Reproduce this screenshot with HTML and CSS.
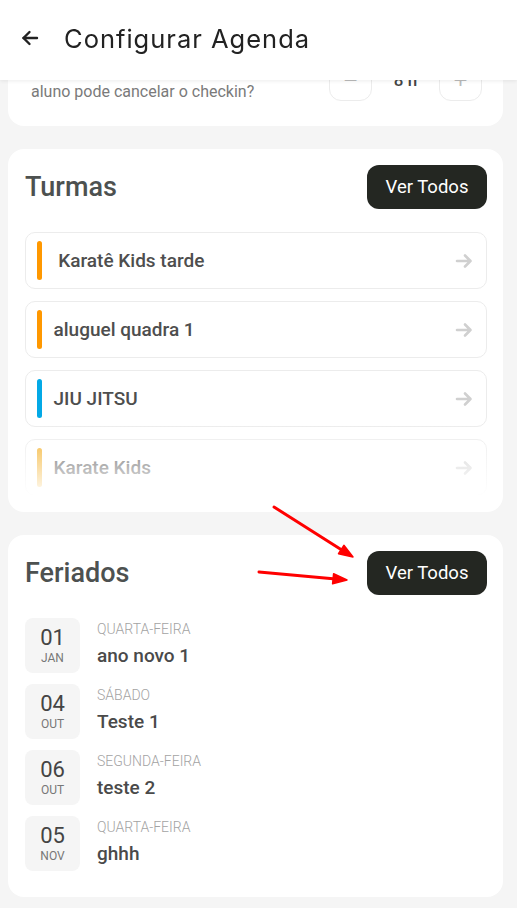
FILE: index.html
```
<!DOCTYPE html>
<html lang="pt-BR">
<head>
    <meta charset="UTF-8">
    <meta name="viewport" content="width=device-width, initial-scale=1.0">
    <title>Configurar Agenda</title>
    <link rel="stylesheet" href="styles.css">
</head>
<body>

<header class="topbar">
    <button class="back-btn" type="button" aria-label="Voltar">
        <svg width="18" height="18" viewBox="0 0 18 18" fill="none" stroke="#222" stroke-width="2.4" stroke-linecap="round" stroke-linejoin="round">
            <path d="M16 9H2.5"/>
            <path d="M8.5 3L2.5 9l6 6"/>
        </svg>
    </button>
    <h1>Configurar Agenda</h1>
</header>

<main class="content">

    <section class="card card-setting">
        <p class="setting-text">aluno pode cancelar o checkin?</p>
        <div class="stepper">
            <button type="button" class="step-btn">&minus;</button>
            <span class="step-value">8 h</span>
            <button type="button" class="step-btn">+</button>
        </div>
    </section>

    <section class="card">
        <div class="card-head">
            <h2>Turmas</h2>
            <button type="button" class="btn-dark">Ver Todos</button>
        </div>
        <div class="class-list">
            <a class="class-item" href="#">
                <span class="bar" style="background:#ff9800"></span>
                <span class="class-name">&nbsp;Karatê Kids tarde</span>
                <svg class="go" width="18" height="18" viewBox="0 0 18 18" fill="none" stroke="#d0d0d0" stroke-width="2.6" stroke-linecap="round" stroke-linejoin="round"><path d="M2 9h13.5M10 3.5L15.5 9 10 14.5"/></svg>
            </a>
            <a class="class-item" href="#">
                <span class="bar" style="background:#ff9800"></span>
                <span class="class-name">aluguel quadra 1</span>
                <svg class="go" width="18" height="18" viewBox="0 0 18 18" fill="none" stroke="#d0d0d0" stroke-width="2.6" stroke-linecap="round" stroke-linejoin="round"><path d="M2 9h13.5M10 3.5L15.5 9 10 14.5"/></svg>
            </a>
            <a class="class-item" href="#">
                <span class="bar" style="background:#03a9e6"></span>
                <span class="class-name">JIU JITSU</span>
                <svg class="go" width="18" height="18" viewBox="0 0 18 18" fill="none" stroke="#d0d0d0" stroke-width="2.6" stroke-linecap="round" stroke-linejoin="round"><path d="M2 9h13.5M10 3.5L15.5 9 10 14.5"/></svg>
            </a>
            <a class="class-item" href="#">
                <span class="bar" style="background:#f4b028"></span>
                <span class="class-name">Karate Kids</span>
                <svg class="go" width="18" height="18" viewBox="0 0 18 18" fill="none" stroke="#d0d0d0" stroke-width="2.6" stroke-linecap="round" stroke-linejoin="round"><path d="M2 9h13.5M10 3.5L15.5 9 10 14.5"/></svg>
            </a>
        </div>
    </section>

    <section class="card card-holidays">
        <div class="card-head">
            <h2>Feriados</h2>
            <button type="button" class="btn-dark">Ver Todos</button>
        </div>
        <ul class="holiday-list">
            <li class="holiday">
                <div class="date-box"><span class="day">01</span><span class="month">JAN</span></div>
                <div class="holiday-info"><span class="weekday">Quarta-feira</span><span class="holiday-name">ano novo 1</span></div>
            </li>
            <li class="holiday">
                <div class="date-box"><span class="day">04</span><span class="month">OUT</span></div>
                <div class="holiday-info"><span class="weekday">Sábado</span><span class="holiday-name">Teste 1</span></div>
            </li>
            <li class="holiday">
                <div class="date-box"><span class="day">06</span><span class="month">OUT</span></div>
                <div class="holiday-info"><span class="weekday">Segunda-feira</span><span class="holiday-name">teste 2</span></div>
            </li>
            <li class="holiday">
                <div class="date-box"><span class="day">05</span><span class="month">NOV</span></div>
                <div class="holiday-info"><span class="weekday">Quarta-feira</span><span class="holiday-name">ghhh</span></div>
            </li>
        </ul>
    </section>

</main>

<!-- red annotation arrows drawn over the screenshot -->
<svg class="annotations" width="517" height="908" viewBox="0 0 517 908">
    <g stroke="#ff0000" stroke-width="3" stroke-linecap="round" fill="#ff0000">
        <line x1="274" y1="507" x2="341" y2="549.5"/>
        <polygon points="353,557 338.5,553.7 343.9,545.3" stroke-width="1.5" stroke-linejoin="round"/>
        <line x1="259" y1="572" x2="333" y2="578.7"/>
        <polygon points="347,580 332.6,583.7 333.6,573.7" stroke-width="1.5" stroke-linejoin="round"/>
    </g>
</svg>

</body>
</html>
```

FILE: styles.css
```
body {
    margin: 0;
    padding: 0;
    background-color: #f5f5f5;
    font-family: Roboto, "Liberation Sans", Arial, sans-serif;
    color: #4a4a4a;
}

/* fixed top bar */
.topbar {
    position: fixed;
    top: 0;
    left: 0;
    right: 0;
    height: 80px;
    background-color: #ffffff;
    display: flex;
    align-items: center;
    padding: 0 20px 4px 20px;
    box-shadow: 0px 1px 4px rgba(0, 0, 0, 0.08);
    z-index: 10;
    box-sizing: border-box;
}

.back-btn {
    background: none;
    border: none;
    padding: 0;
    margin: 0 24px 0 0;
    width: 20px;
    height: 20px;
    display: flex;
    align-items: center;
    justify-content: center;
}

.topbar h1 {
    margin: 0;
    font-family: Inter, Lato, sans-serif;
    font-weight: 400;
    font-size: 25.5px;
    letter-spacing: 1px;
    color: #222;
}

.content {
    display: flex;
    flex-direction: column;
    gap: 23px;
    padding: 38px 14px 12px 8px;
}

.card {
    background-color: #ffffff;
    border-radius: 16px;
    padding: 16px 16px 17px 17px;
}

/* first card, mostly under the top bar */
.card-setting {
    display: flex;
    justify-content: space-between;
    align-items: flex-end;
    padding: 20px 21px 21px 23px;
}

.setting-text {
    margin: 0;
    font-size: 16px;
    line-height: 26px;
    color: #7a7a7a;
}

.stepper {
    display: flex;
    align-items: center;
    margin-bottom: 4px;
}

.step-btn {
    width: 43px;
    height: 43px;
    border: 1px solid #ececec;
    border-radius: 12px;
    background: #fff;
    font-size: 24px;
    color: #bbb;
    padding: 0;
}

.step-value {
    width: 67px;
    text-align: center;
    font-size: 17px;
    font-weight: 500;
    color: #444;
}

.card-head {
    display: flex;
    justify-content: space-between;
    align-items: center;
}

.card-head h2 {
    margin: 0;
    font-size: 27px;
    font-weight: 500;
    color: #4d5150;
}

.btn-dark {
    width: 120px;
    height: 44px;
    border: none;
    border-radius: 12px;
    background-color: #242722;
    color: #ffffff;
    font-family: Roboto, sans-serif;
    font-size: 18.5px;
    cursor: pointer;
}

/* class list with faded bottom */
.class-list {
    position: relative;
    margin-top: 23px;
    height: 263px;
    overflow: hidden;
    display: flex;
    flex-direction: column;
    gap: 12px;
}

.class-list::after {
    content: "";
    position: absolute;
    left: 0;
    right: 0;
    bottom: 0;
    height: 72px;
    background: linear-gradient(to bottom, rgba(255, 255, 255, 0), rgba(255, 255, 255, 0.95));
}

.class-item {
    flex-shrink: 0;
    display: flex;
    align-items: center;
    height: 57px;
    box-sizing: border-box;
    border: 1.5px solid #ececec;
    border-radius: 10px;
    padding: 0 13px 0 10.5px;
    text-decoration: none;
}

.bar {
    width: 5px;
    height: 39px;
    border-radius: 3px;
    margin-right: 12px;
}

.class-name {
    flex: 1;
    font-size: 19px;
    font-weight: 500;
    color: #4e4e4e;
}

.card-holidays {
    padding-bottom: 26px;
}

.holiday-list {
    list-style-type: none;
    margin: 23px 0 0 0;
    padding: 0;
    display: flex;
    flex-direction: column;
    gap: 11px;
}

.holiday {
    display: flex;
    align-items: flex-start;
    gap: 17px;
}

.date-box {
    width: 55px;
    height: 55px;
    border-radius: 8px;
    background-color: #f5f5f5;
    display: flex;
    flex-direction: column;
    align-items: center;
    justify-content: center;
}

.day {
    font-size: 22px;
    line-height: 24px;
    color: #444;
}

.month {
    font-size: 12px;
    line-height: 16px;
    color: #777;
}

.holiday-info {
    display: flex;
    flex-direction: column;
    padding-top: 1px;
}

.weekday {
    font-size: 14px;
    font-weight: 300;
    line-height: 20px;
    text-transform: uppercase;
    color: #a3a3a3;
}

.holiday-name {
    margin-top: 5px;
    font-size: 19px;
    font-weight: 500;
    color: #4a4a4a;
}

.annotations {
    position: absolute;
    top: 0;
    left: 0;
    pointer-events: none;
    z-index: 20;
}
```
